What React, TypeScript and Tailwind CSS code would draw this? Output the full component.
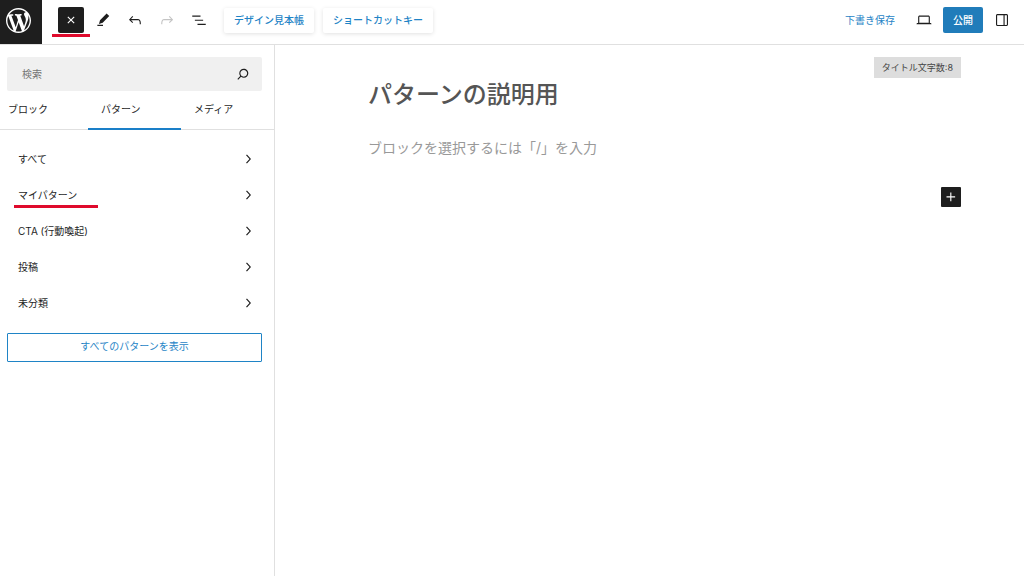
import { useState } from 'react';
import type { ReactNode } from 'react';

interface IconProps {
  d: string;
  className?: string;
}

const icons = {
  wordpress:
    'M20 10c0-5.51-4.49-10-10-10C4.48 0 0 4.49 0 10c0 5.52 4.48 10 10 10 5.51 0 10-4.48 10-10zM7.78 15.37L4.37 6.22c.55-.02 1.17-.08 1.17-.08.5-.06.44-1.13-.06-1.11 0 0-1.45.11-2.37.11-.18 0-.37 0-.58-.01C4.12 2.69 6.87 1.11 10 1.11c2.33 0 4.45.87 6.05 2.34-.68-.11-1.65.39-1.65 1.58 0 .74.45 1.36.9 2.1.35.61.55 1.36.55 2.46 0 1.49-1.4 5-1.4 5l-3.03-8.37c.54-.02.82-.17.82-.17.5-.05.44-1.25-.06-1.22 0 0-1.44.12-2.38.12-.87 0-2.33-.12-2.33-.12-.5-.03-.56 1.2-.06 1.22l.92.08 1.26 3.41zM17.41 10c.24-.64.74-1.87.43-4.25.7 1.29 1.05 2.71 1.05 4.25 0 3.29-1.73 6.24-4.4 7.78.97-2.59 1.94-5.2 2.92-7.78zM6.1 18.09C3.12 16.65 1.11 13.53 1.11 10c0-1.3.23-2.48.72-3.59C3.25 10.3 4.67 14.2 6.1 18.09zm4.03-6.63l2.58 6.98c-.86.29-1.76.45-2.71.45-.79 0-1.57-.11-2.29-.33.81-2.38 1.62-4.74 2.42-7.1z',
  plus: 'M11 12.5V17.5H12.5V12.5H17.5V11H12.5V6H11V11H6V12.5H11Z',
  close: 'M12 13.06l3.71 3.71 1.06-1.06L13.06 12l3.71-3.71-1.06-1.06L12 10.94 8.29 7.23 7.23 8.29 10.94 12l-3.71 3.71 1.06 1.06L12 13.06z',
  pencil: 'M20.3 6.6 16.8 3.4 8 12.2 6.6 17.2 11.6 15.8 20.3 6.6ZM12 18.3H4.5V20H12v-1.7Z',
  undo: 'M18.3 11.7c-.6-.6-1.4-.9-2.3-.9H6.7l2.9-3.3-1.1-1-4.5 5L8.5 16l1-1-2.7-2.7H16c.5 0 .9.2 1.3.5 1 1 1 3.4 1 4.5v.3h1.5v-.2c0-1.5 0-4.3-1.5-5.7z',
  redo: 'M15.6 6.5l-1.1 1 2.9 3.3H8c-.9 0-1.7.3-2.3.9-1.4 1.5-1.4 4.2-1.4 5.6v.2h1.5v-.3c0-1.1 0-3.5 1-4.5.3-.3.7-.5 1.3-.5h9.2L14.5 15l1.1 1.1 4.6-4.6-4.6-5z',
  listView: 'M3 6h11v1.5H3V6Zm3.5 5.5h11V13h-11v-1.5ZM21 17H10v1.5h11V17Z',
  desktop:
    'M20.5 16h-.7V8c0-1.1-.9-2-2-2H6.2c-1.1 0-2 .9-2 2v8h-.7c-.8 0-1.5.7-1.5 1.5h20c0-.8-.7-1.5-1.5-1.5zM5.7 8c0-.3.2-.5.5-.5h11.6c.3 0 .5.2.5.5v7.6H5.7V8z',
  drawer:
    'M18 4H6c-1.1 0-2 .9-2 2v12c0 1.1.9 2 2 2h12c1.1 0 2-.9 2-2V6c0-1.1-.9-2-2-2zm-4 14.5H6c-.3 0-.5-.2-.5-.5V6c0-.3.2-.5.5-.5h8v13zm4.5-.5c0 .3-.2.5-.5.5h-2.5v-13H18c.3 0 .5.2.5.5v12z',
  search:
    'M13 5c-3.3 0-6 2.7-6 6 0 1.4.5 2.7 1.3 3.7l-3.8 3.8 1.1 1.1 3.8-3.8c1 .8 2.3 1.3 3.7 1.3 3.3 0 6-2.7 6-6S16.3 5 13 5zm0 10.5c-2.5 0-4.5-2-4.5-4.5s2-4.5 4.5-4.5 4.5 2 4.5 4.5-2 4.5-4.5 4.5z',
  chevron: 'M10.6 6L9.4 7l4.6 5-4.6 5 1.2 1 5.4-6z',
};

const tabs = ['ブロック', 'パターン', 'メディア'];

const categories = ['すべて', 'マイパターン', 'CTA (行動喚起)', '投稿', '未分類'];

function Icon({ d, className = 'size-[18px]' }: IconProps) {
  return (
    <svg viewBox="0 0 24 24" fill="currentColor" aria-hidden="true" className={className}>
      <path d={d} />
    </svg>
  );
}

function ToolButton({ label, disabled, children }: { label: string; disabled?: boolean; children: ReactNode }) {
  return (
    <button
      aria-label={label}
      disabled={disabled}
      className="flex size-8 items-center justify-center disabled:text-[#c4c4c4]"
    >
      {children}
    </button>
  );
}

function Header() {
  return (
    <header className="flex h-[45px] shrink-0 border-b border-[#e0e0e0]">
      <a href="#" aria-label="WordPress" className="flex w-[42px] shrink-0 items-center justify-center bg-[#1e1e1e] pr-[5px] pb-[3px] text-white">
        <svg viewBox="0 0 20 20" fill="currentColor" aria-hidden="true" className="size-[25px]">
          <path d={icons.wordpress} />
        </svg>
      </a>
      <div className="flex flex-1 items-center justify-between pr-[6px] pb-1 pl-4">
        <div className="flex items-center">
          <div className="relative mr-[3px]">
            <button aria-label="閉じる" className="flex size-[26px] items-center justify-center rounded-[2px] bg-[#1e1e1e] text-white">
              <Icon d={icons.close} />
            </button>
            <span className="absolute -inset-x-[6px] top-full mt-px h-[3px] bg-[#df0a2c]" />
          </div>
          <ToolButton label="編集">
            <Icon d={icons.pencil} />
          </ToolButton>
          <ToolButton label="元に戻す">
            <Icon d={icons.undo} />
          </ToolButton>
          <ToolButton label="やり直し" disabled>
            <Icon d={icons.redo} />
          </ToolButton>
          <ToolButton label="リスト表示">
            <Icon d={icons.listView} />
          </ToolButton>
          <div className="ml-[9px] flex gap-[9px] text-[10px] leading-4 font-medium text-[#1f84c6]">
            <button className="h-[25px] rounded-[2px] px-[10px] shadow-[0_1px_4px_rgba(0,0,0,0.12)]">デザイン見本帳</button>
            <button className="h-[25px] rounded-[2px] px-[10px] shadow-[0_1px_4px_rgba(0,0,0,0.12)]">ショートカットキー</button>
          </div>
        </div>
        <div className="flex items-center">
          <button className="mr-[13px] text-[10px] leading-4 text-[#1f84c6]">下書き保存</button>
          <ToolButton label="プレビュー">
            <Icon d={icons.desktop} />
          </ToolButton>
          <button className="mx-[3px] h-[26px] w-10 rounded-[2px] bg-[#207cba] text-[10px] leading-4 font-medium text-white">公開</button>
          <ToolButton label="設定">
            <Icon d={icons.drawer} />
          </ToolButton>
        </div>
      </div>
    </header>
  );
}

function Inserter() {
  const [activeTab, setActiveTab] = useState('パターン');

  return (
    <aside className="w-[275px] shrink-0 border-r border-[#e0e0e0] text-[10px] leading-4">
      <div className="relative mt-3 mr-3 ml-[7px]">
        <input
          type="search"
          aria-label="検索"
          placeholder="検索"
          className="h-[34px] w-full rounded-[2px] bg-[#f0f0f0] px-[15px] outline-none placeholder:text-[#757575]"
        />
        <button aria-label="検索を実行" className="absolute inset-y-0 right-[10px]">
          <Icon d={icons.search} />
        </button>
      </div>

      <div role="tablist" className="flex border-b border-[#e0e0e0]">
        {tabs.map((tab) => (
          <button
            key={tab}
            role="tab"
            aria-selected={activeTab === tab}
            onClick={() => setActiveTab(tab)}
            className="-mb-px h-[39px] flex-1 border-b-2 border-transparent pb-0.5 pl-[13px] text-left first:-ml-[5px] aria-selected:border-[#1a7fc8]"
          >
            {tab}
          </button>
        ))}
      </div>

      <ul className="mt-[11px]">
        {categories.map((category) => (
          <li key={category}>
            <button className="flex h-9 w-full items-center justify-between pr-[17px] pl-[18px] text-left">
              <span className="relative">
                {category}
                {category === 'マイパターン' && (
                  <span className="absolute top-full -left-1 mt-0.5 h-[3px] w-[84px] bg-[#df0a2c]" />
                )}
              </span>
              <Icon d={icons.chevron} />
            </button>
          </li>
        ))}
      </ul>

      <div className="mt-3 mr-3 ml-[7px]">
        <button className="h-[29px] w-full rounded-[1px] border border-[#1f84c6] pb-1 text-[#1f84c6]">
          すべてのパターンを表示
        </button>
      </div>
    </aside>
  );
}

function Editor() {
  const title = 'パターンの説明用';

  return (
    <main className="flex flex-1 flex-col pt-3 pr-[63px] pl-[93px]">
      <div className="flex h-[21px] items-center self-end bg-[#dddddd] px-2 text-[9px] leading-3 text-[#444]">
        タイトル文字数:{title.length}
      </div>
      <h1 className="mt-px text-2xl font-medium text-[#555]">{title}</h1>
      <input
        aria-label="ブロック"
        placeholder="ブロックを選択するには「/」を入力"
        className="mt-6 h-6 w-full text-sm outline-none placeholder:text-[#999]"
      />
      <button aria-label="ブロックを追加" className="mt-7 flex size-5 items-center justify-center self-end rounded-[1px] bg-[#1e1e1e] text-white">
        <Icon d={icons.plus} />
      </button>
    </main>
  );
}

export default function App() {
  return (
    <div className="flex min-h-screen flex-col bg-white font-['Inter','Noto_Sans_CJK_JP',sans-serif] text-[#1e1e1e]">
      <Header />
      <div className="flex flex-1">
        <Inserter />
        <Editor />
      </div>
    </div>
  );
}
